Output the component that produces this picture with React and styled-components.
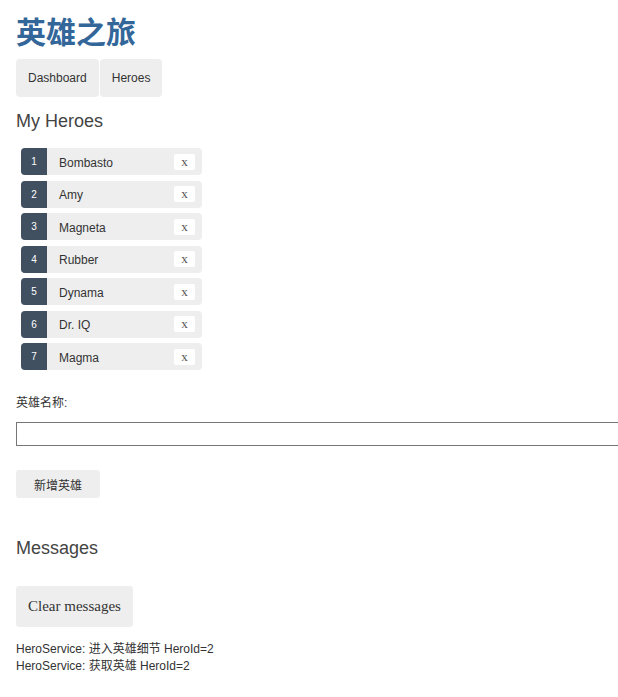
import React from 'react';
import styled, { createGlobalStyle } from 'styled-components';

const Global = createGlobalStyle`
  html, body { margin: 0; padding: 0; background: #fff; }
  body {
    font-family: Arial, "Liberation Sans", "Noto Sans CJK SC", sans-serif;
    color: #333;
  }
`;

const Page = styled.div`
  padding: 10px 0 20px 16px;
  overflow: hidden;
`;

const Title = styled.h1`
  margin: 0;
  font-family: "Noto Sans CJK SC", sans-serif;
  font-size: 30px;
  line-height: 40px;
  font-weight: 700;
  color: #336699;
`;

const Nav = styled.nav`
  display: flex;
  gap: 1px;
  margin-top: 9px;
`;

const NavLink = styled.a`
  display: block;
  padding: 12px;
  font-size: 12px;
  line-height: 14px;
  color: #333;
  background: #eee;
  border-radius: 4px;
  text-decoration: none;
`;

const Heading = styled.h2`
  margin: ${p => p.$top}px 0 0;
  font-family: Arial, "Liberation Sans", sans-serif;
  font-size: 18px;
  line-height: 22px;
  font-weight: normal;
  color: #444;
`;

const HeroList = styled.ul`
  list-style: none;
  margin: 16px 0 0 5px;
  padding: 0;
  width: 181px;
  display: flex;
  flex-direction: column;
  gap: 5.5px;
`;

const HeroItem = styled.li`
  display: flex;
  align-items: center;
  height: 27px;
  background: #eee;
  border-radius: 4px;
`;

const Badge = styled.span`
  display: flex;
  align-items: center;
  justify-content: center;
  width: 26px;
  height: 100%;
  background: #405061;
  color: #fff;
  font-size: 10px;
  border-radius: 4px 0 0 4px;
`;

const Name = styled.span`
  flex: 1;
  margin-left: 12px;
  padding-top: 2px;
  font-size: 12px;
  color: #333;
`;

const DeleteBtn = styled.button`
  width: 21px;
  height: 16px;
  margin-right: 7px;
  padding: 0;
  border: none;
  border-radius: 2px;
  background: #fff;
  color: #555;
  font-family: "Liberation Serif", serif;
  font-size: 13px;
  line-height: 14px;
`;

const Label = styled.label`
  display: block;
  margin-top: 25px;
  font-size: 12px;
  line-height: 16px;
  color: #333;
`;

const NameInput = styled.input`
  display: block;
  box-sizing: border-box;
  width: calc(100% + 30px);
  height: 24px;
  margin-top: 11px;
  border: 1px solid #767676;
  padding: 2px 4px;
  background: #fff;
`;

const PlainButton = styled.button`
  display: block;
  margin-top: ${p => p.$top}px;
  border: none;
  border-radius: 3px;
  background: #eee;
  color: #333;
  cursor: pointer;
`;

const AddButton = styled(PlainButton)`
  height: 28px;
  padding: 0 18px;
  font-family: "Noto Sans CJK SC", serif;
  font-size: 12px;
`;

const ClearButton = styled(PlainButton)`
  height: 41px;
  padding: 0 12px;
  font-family: "Liberation Serif", Georgia, serif;
  font-size: 15px;
`;

const MessageList = styled.div`
  margin-top: 14px;
  font-size: 12px;
  line-height: 17px;
  color: #333;
`;

const heroes = [
  [1, 'Bombasto'],
  [2, 'Amy'],
  [3, 'Magneta'],
  [4, 'Rubber'],
  [5, 'Dynama'],
  [6, 'Dr. IQ'],
  [7, 'Magma'],
];

export default function App() {
  return (
    <Page>
      <Global />
      <Title>英雄之旅</Title>
      <Nav>
        <NavLink href="#">Dashboard</NavLink>
        <NavLink href="#">Heroes</NavLink>
      </Nav>
      <Heading $top={13}>My Heroes</Heading>
      <HeroList>
        {heroes.map(([id, name]) => (
          <HeroItem key={id}>
            <Badge>{id}</Badge>
            <Name>{name}</Name>
            <DeleteBtn>x</DeleteBtn>
          </HeroItem>
        ))}
      </HeroList>
      <Label>英雄名称:</Label>
      <NameInput type="text" />
      <AddButton $top={24}>新增英雄</AddButton>
      <Heading $top={39}>Messages</Heading>
      <ClearButton $top={27}>Clear messages</ClearButton>
      <MessageList>
        <div>HeroService: 进入英雄细节 HeroId=2</div>
        <div>HeroService: 获取英雄 HeroId=2</div>
      </MessageList>
    </Page>
  );
}
